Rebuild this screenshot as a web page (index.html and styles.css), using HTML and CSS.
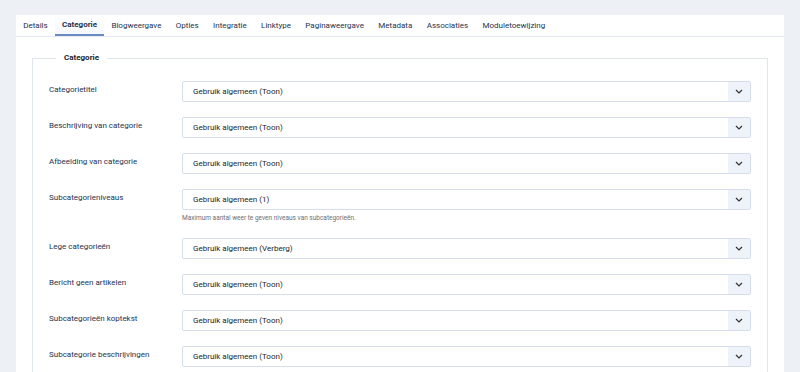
FILE: index.html
```html
<!DOCTYPE html>
<html lang="nl">
<head>
  <meta charset="UTF-8">
  <meta name="viewport" content="width=device-width, initial-scale=1">
  <title>Categorie opties</title>
  <link rel="stylesheet" href="styles.css">
</head>
<body>

<div class="card">
  <!-- tabbladen -->
  <ul class="tabs">
    <li>Details</li>
    <li class="active">Categorie</li>
    <li>Blogweergave</li>
    <li>Opties</li>
    <li>Integratie</li>
    <li>Linktype</li>
    <li>Paginaweergave</li>
    <li>Metadata</li>
    <li>Associaties</li>
    <li>Moduletoewijzing</li>
  </ul>

  <div class="tab-body">
    <fieldset class="options">
      <legend>Categorie</legend>

      <div class="row">
        <label>Categorietitel</label>
        <div class="control"><div class="select"><span>Gebruik algemeen (Toon)</span><i class="arrow"><svg width="8" height="5" viewBox="0 0 8 5"><polyline points="1,1 4,4 7,1" fill="none" stroke="#333" stroke-width="1.2"/></svg></i></div></div>
      </div>

      <div class="row">
        <label>Beschrijving van categorie</label>
        <div class="control"><div class="select"><span>Gebruik algemeen (Toon)</span><i class="arrow"><svg width="8" height="5" viewBox="0 0 8 5"><polyline points="1,1 4,4 7,1" fill="none" stroke="#333" stroke-width="1.2"/></svg></i></div></div>
      </div>

      <div class="row">
        <label>Afbeelding van categorie</label>
        <div class="control"><div class="select"><span>Gebruik algemeen (Toon)</span><i class="arrow"><svg width="8" height="5" viewBox="0 0 8 5"><polyline points="1,1 4,4 7,1" fill="none" stroke="#333" stroke-width="1.2"/></svg></i></div></div>
      </div>

      <div class="row">
        <label>Subcategorieniveaus</label>
        <div class="control">
          <div class="select"><span>Gebruik algemeen (1)</span><i class="arrow"><svg width="8" height="5" viewBox="0 0 8 5"><polyline points="1,1 4,4 7,1" fill="none" stroke="#333" stroke-width="1.2"/></svg></i></div>
          <div class="help">Maximum aantal weer te geven niveaus van subcategorieën.</div>
        </div>
      </div>

      <div class="row">
        <label>Lege categorieën</label>
        <div class="control"><div class="select"><span>Gebruik algemeen (Verberg)</span><i class="arrow"><svg width="8" height="5" viewBox="0 0 8 5"><polyline points="1,1 4,4 7,1" fill="none" stroke="#333" stroke-width="1.2"/></svg></i></div></div>
      </div>

      <div class="row">
        <label>Bericht geen artikelen</label>
        <div class="control"><div class="select"><span>Gebruik algemeen (Toon)</span><i class="arrow"><svg width="8" height="5" viewBox="0 0 8 5"><polyline points="1,1 4,4 7,1" fill="none" stroke="#333" stroke-width="1.2"/></svg></i></div></div>
      </div>

      <div class="row">
        <label>Subcategorieën koptekst</label>
        <div class="control"><div class="select"><span>Gebruik algemeen (Toon)</span><i class="arrow"><svg width="8" height="5" viewBox="0 0 8 5"><polyline points="1,1 4,4 7,1" fill="none" stroke="#333" stroke-width="1.2"/></svg></i></div></div>
      </div>

      <div class="row">
        <label>Subcategorie beschrijvingen</label>
        <div class="control"><div class="select"><span>Gebruik algemeen (Toon)</span><i class="arrow"><svg width="8" height="5" viewBox="0 0 8 5"><polyline points="1,1 4,4 7,1" fill="none" stroke="#333" stroke-width="1.2"/></svg></i></div></div>
      </div>
    </fieldset>
  </div>
</div>

</body>
</html>
```

FILE: styles.css
```css
body {
  margin: 0;
  background: #edf0f5;
  font-family: Roboto, "Liberation Sans", sans-serif;
  font-size: 8px;
  color: #22262a;
}
.card {
  background: #fff;
  margin: 15px 16px 0;
  height: 400px;
}
.tabs {
  list-style: none;
  margin: 0;
  padding: 0;
  display: flex;
  height: 21px;
  border-bottom: 1px solid #e3e8f0;
}
.tabs li {
  padding: 0 7.2px;
  line-height: 21px;
  color: #1d3350;
  white-space: nowrap;
}
.tabs li.active {
  font-weight: 700;
  background: linear-gradient(to bottom, #fff, #f4f7fb);
  border-bottom: 2px solid #6a8bc0;
  height: 19px;
  line-height: 20px;
}
.tab-body {
  padding: 16px 16px 0;
}
.options {
  margin: 0;
  border: 1px solid #dfe5ee;
  padding: 18px 16px 0;
  min-width: 0;
}
.options legend {
  padding: 0 8px;
  margin-left: 7px;
  font-weight: 700;
  color: #22262a;
  line-height: 10px;
}
.row {
  display: grid;
  grid-template-columns: 133px 1fr;
  margin-bottom: 15px;
}
.row label {
  padding-top: 4px;
  line-height: 10px;
  color: #1d3350;
}
.select {
  display: flex;
  align-items: center;
  height: 19px;
  border: 1px solid #d5ddea;
  border-radius: 2px;
}
.select span {
  flex: 1;
  padding-left: 10px;
}
.select .arrow {
  width: 22px;
  height: 19px;
  background: #eef2f9;
  display: flex;
  align-items: center;
  justify-content: center;
}
.help {
  margin-top: 3px;
  font-size: 6.5px;
  line-height: 10px;
  color: #6b6f74;
}
```
